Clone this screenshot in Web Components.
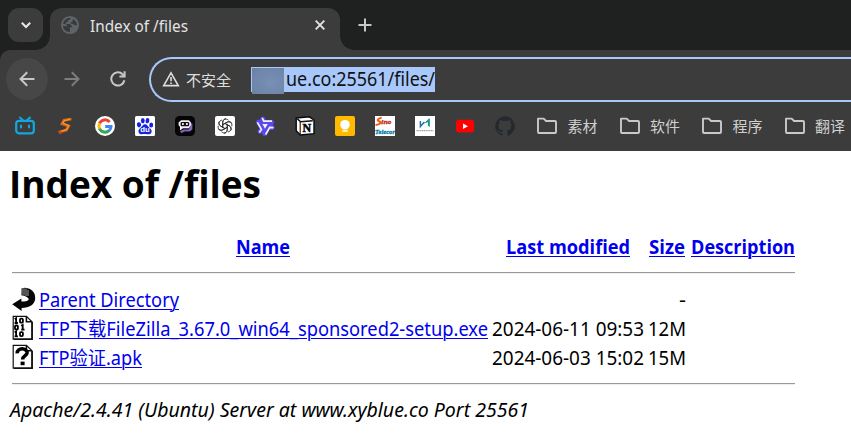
<!DOCTYPE html>
<html lang="zh-CN">
<head>
<meta charset="utf-8">
<title>Index of /files</title>
<style>
html,body{margin:0;height:444px;overflow:hidden;background:#fff}
body{font-family:"Noto Sans","Noto Sans CJK SC",sans-serif;width:851px}
</style>
</head>
<body>
<browser-window></browser-window>
<script>
const make = (name, html, init) => customElements.define(name, class extends HTMLElement {
  connectedCallback() {
    if (this.shadowRoot) return;
    const root = this.attachShadow({mode: 'open'});
    const t = document.createElement('template');
    t.innerHTML = typeof html === 'function' ? html(this) : html;
    root.appendChild(t.content.cloneNode(true));
    if (init) init(this, root);
  }
});

const spin = (angles, d) => angles.map(a => `<path transform="rotate(${a} 10 10)" d="${d}"/>`).join('');

const icons = {
  chevron: ['0 0 12 12', '<path d="M1.8 3.8 6 8l4.2-4.2" fill="none" stroke="#e8e8e8" stroke-width="2"/>'],
  globe: ['0 0 20 20', '<circle cx="10" cy="10" r="9.1" fill="#5f6368"/><path d="M3.1 8.7C4 5 7 3 10.4 3.1L9.8 5H7.7v2H5.8v2.1h4.1l2.2 2.1v1h-2.2v4.7C6 17 3.2 14.4 2.9 11l4 .2V9.4zM13.4 4l3 3.2.7 3-3-.1-.9-1.3h-2.4V7h1.8V5z" fill="#37383a"/>'],
  close: ['0 0 12 12', '<path d="m1.7 1.7 8.6 8.6m0-8.6-8.6 8.6" stroke="#e4e4e4" stroke-width="1.9"/>'],
  plus: ['0 0 14 14', '<path d="M7 .5v13M.5 7h13" stroke="#c7c7c7" stroke-width="2"/>'],
  back: ['0 0 16 16', '<path d="M15.5 8H2M8.2 1.3 1.5 8l6.7 6.7" fill="none" stroke="#c7c7c7" stroke-width="2"/>'],
  forward: ['0 0 16 16', '<path d="M.5 8H14M7.8 1.3 14.5 8l-6.7 6.7" fill="none" stroke="#7d7d7d" stroke-width="2"/>'],
  reload: ['0 0 16 16', '<path d="M14.4 9.2A6.6 6.6 0 1 1 12.8 3.5L14 5" fill="none" stroke="#c7c7c7" stroke-width="2"/><path d="M15.6 .2v6.3H9.4V4.6h4.2V.2z" fill="#c7c7c7"/>'],
  warn: ['0 0 18 16', '<path d="M9 1.8 1.7 14.6h14.6z" fill="none" stroke="#dedede" stroke-width="1.6"/><path d="M9 6v4.3m0 1.2v1.6" stroke="#dedede" stroke-width="1.6"/>'],
  folder: ['0 0 22 18', '<path d="M2 1.6h5.7l2.4 2.4H19q1 0 1 1V15q0 1-1 1H3q-1 0-1-1z" fill="none" stroke="#c9c9c9" stroke-width="1.9" stroke-linejoin="round"/>'],
  tv: ['0 0 20 20', '<path d="m5 1.5 3.2 3M15 1.5l-3.2 3M6 9.6v2m8-2v2" stroke="#12a7df" stroke-width="2" stroke-linecap="round"/><rect x="1.2" y="4.8" width="17.6" height="12.6" rx="2.8" fill="none" stroke="#12a7df" stroke-width="2.2"/>'],
  bolt: ['0 0 20 20', '<path d="M16.4 3 9 4.3 7 7.8l6.6 2.2-2.2 4-7.8 2.2" fill="none" stroke="#e3671c" stroke-width="2.7"/><path d="m15 3.2-6 1.6-1 2.4 6 2.2-2 3.8-6 2.1" fill="none" stroke="#f4a12b" stroke-width="1"/><path d="m3.6 15.2 1.6 3.2 3.2-2.4z" fill="#d43c20"/>'],
  google: ['0 0 20 20', '<circle cx="10" cy="10" r="10" fill="#fff"/><g fill="none" stroke-width="3"><path d="M14.6 6A6 6 0 0 0 4.5 7.4" stroke="#ea4335"/><path d="M4.6 7.3a6 6 0 0 0 0 5.4" stroke="#fbbc05"/><path d="M4.5 12.6a6 6 0 0 0 9.7 1.8" stroke="#34a853"/><path d="M14 14.7c1.3-1.1 2-2.6 2-4.2h-5.8" stroke="#4285f4"/></g>'],
  paw: ['0 0 20 20', '<rect width="20" height="20" rx="1.5" fill="#fff"/><g fill="#1722df"><ellipse cx="4" cy="8.8" rx="2.1" ry="2.6" transform="rotate(-14 4 8.8)"/><ellipse cx="7.8" cy="4.6" rx="1.9" ry="2.7"/><ellipse cx="12.4" cy="4.6" rx="1.9" ry="2.7" transform="rotate(8 12 5)"/><ellipse cx="16.2" cy="9" rx="2" ry="2.5"/><path d="M10 8.3c2.2 0 2.6 2 4.3 3.4 2.4 2 2.8 3.1 2.1 4.7-1.2 2.7-3.8 1.5-6.3 1.5s-5.3 1.1-6.4-1.5c-.8-1.9.2-3.2 2.2-4.8 1.6-1.3 1.9-3.3 4.1-3.3z"/></g><text x="10" y="16.4" text-anchor="middle" font-family="Liberation Sans,sans-serif" font-weight="700" font-size="7.8" fill="#fff">du</text>'],
  poe: ['0 0 20 20', '<rect width="20" height="20" rx="4.5" fill="#050505"/><path d="M15 7.5h2.4v6l-2.6 2H10l-4 1.8v-2.6l8-1z" fill="#416fcf"/><path d="M14.5 8h1.7v4.4l-1.8 1.8H9L5.4 16" fill="none" stroke="#b45aae" stroke-width="1.2"/><path d="M6 4.2h8l1 1.4.9.6v3.4l-.9.5-1 2.2H8L5 14.6v-2.8L4.6 10l-1-.5V6.2l1.2-.6z" fill="#f2eff6"/><rect x="5.6" y="6" width="8.6" height="4.2" rx="1.2" fill="#111"/><path d="M7.9 7.1v2m4-2v2" stroke="#fff" stroke-width="1.6"/>'],
  gpt: ['0 0 20 20', '<rect width="20" height="20" rx="2" fill="#fff"/><g fill="none" stroke="#2a2a2a" stroke-width=".85" stroke-linejoin="round">' + spin([0, 60, 120, 180, 240, 300], 'M7.8 11.2V6.4c0-3.2 3.7-4.4 5.8-2.1M7.8 8.6l4.3-2.5c2-1.1 4.2-.2 4.7 1.2') + '</g>'],
  star: ['0 0 20 20', '<g fill="#5a49ea">' + spin([0, 120, 240], 'M6 .8h3.2L11 4h7.2l1.2 2.4-2.6 4.4H10L4.4 6.6z') + '</g><g fill="none" stroke="#f3f0ff" stroke-width="1.7">' + spin([0, 120, 240], 'M7.2 1.8 8.8 5.2H17') + '</g><path d="M7.4 8h5.4L10 12.8z" fill="#f3f0ff"/>'],
  notion: ['0 0 20 20', '<path d="M1.2 2 14.3.8 19 4v13.7L5.2 19 1.2 14.8z" fill="#fff" stroke="#080808" stroke-width="1.4"/><path d="m2.4 2.9 3.2 2.8 12.2-.9" fill="none" stroke="#111" stroke-width="1.5"/><path d="M5.2 5.7V18" stroke="#111" stroke-width="1.1"/><text x="11.9" y="16" text-anchor="middle" font-family="Liberation Serif,serif" font-weight="700" font-size="12" stroke="#080808" stroke-width=".5">N</text>'],
  keep: ['0 0 20 20', '<rect width="20" height="20" rx="2" fill="#ffba00"/><circle cx="10" cy="8.7" r="4.8" fill="#fff"/><path d="M7.2 11h5.6v2.3H7.2zM7.4 14.2h5.2v1.6H7.4z" fill="#fff"/>'],
  sino: ['0 0 20 20', '<path fill="#fff" d="M0 0h20v20H0z"/><path d="M6.7 1.6C2.6 2.5 1.6 4.4 4 5.1s2.3 2.8-3.5 4" fill="none" stroke="#e35a19" stroke-width="1.9"/><text x="6.3" y="8" textLength="10" lengthAdjust="spacingAndGlyphs" font-family="Liberation Serif,serif" font-size="7" font-weight="700" font-style="italic" fill="#c51f22" stroke="#c51f22" stroke-width=".3">ino</text><text x="0" y="18" textLength="20" lengthAdjust="spacingAndGlyphs" font-family="Liberation Serif,serif" font-size="6.5" font-weight="700" font-style="italic" fill="#087ca6" stroke="#087ca6" stroke-width=".3">Telecor</text>'],
  wave: ['0 0 20 20', '<path fill="#fff" d="M0 0h20v20H0z"/><path d="M5.4 5v5.6l4-4.6" fill="none" stroke="#2a6ea6" stroke-width="1.5"/><path d="M8.8 7.4 14 2.6h.9v8.4l-2-1.2V6.2z" fill="#1c9a91"/><path d="M1.5 14.6h17" stroke="#9aa3aa" stroke-width="1.1" stroke-dasharray="1.3 .5"/>'],
  youtube: ['0 0 20 20', '<rect x="1" y="3.8" width="18" height="12.8" rx="3" fill="#f00"/><path d="m8 7.5 5 2.7-5 2.7z" fill="#fff"/>'],
  github: ['0 0 20 20', '<path fill="#24292f" d="M10 .3a10 10 0 0 0-3.2 19.4c.5.1.7-.2.7-.5v-2c-2.8.6-3.4-1.2-3.4-1.2-.4-1.1-1.1-1.4-1.1-1.4-.9-.6.1-.6.1-.6 1 .1 1.5 1 1.5 1 .9 1.5 2.3 1.1 2.9.8.1-.6.4-1.1.7-1.3-2.3-.3-4.6-1.1-4.6-5 0-1.1.4-2 1-2.7-.1-.3-.4-1.3.1-2.7 0 0 .9-.3 2.8 1a9.5 9.5 0 0 1 5 0c1.9-1.3 2.8-1 2.8-1 .5 1.4.2 2.4.1 2.7.6.7 1 1.6 1 2.7 0 3.9-2.3 4.7-4.6 5 .4.3.7.9.7 1.9v2.8c0 .3.2.6.7.5A10 10 0 0 0 10 .3z"/>'],
  parent: ['0 0 24 26', '<path d="M9.4 2.4 13 1.8C19.5 2.6 23.4 6 23.2 12.4 22.8 18.6 17.4 21.6 9.6 22V25L.2 18.2 9.4 12.4v3.2c4.6-.2 7-1 7.4-2.4C16.4 11.4 13 9.6 9.4 9.2z" fill="#050505"/><path d="M10 2.6v6m2-6.4v7m2-6.6v7.4m2-6v6" stroke="#b8b8b8" stroke-width=".9"/>'],
  binary: ['0 0 24 26', '<path d="M1.2 1.3h13.2l5.6 5.5v17.4H1.2z" fill="#fff" stroke="#111" stroke-width="1.2"/><path d="M14.4 1.3v5.5H20M20.1 7v17.3H2" fill="none" stroke="#111" stroke-width="1.6"/><g fill="none" stroke="#000" stroke-width="1.8"><path d="m2.6 4 1.5-.8v5M2.6 8h3.3M9.2 10.7l1.5-.8v5m-1.5-.2h3.3M2.6 17.3l1.5-.8v5m-1.5-.2h3.3"/><rect x="8" y="3.7" width="2.9" height="4" rx="1"/><rect x="3" y="10.5" width="2.9" height="4" rx="1"/><rect x="8" y="17.1" width="2.9" height="4" rx="1"/></g>'],
  unknown: ['0 0 24 26', '<path d="M1.2 1.3h13.2l5.6 5.5v17.4H1.2z" fill="#fff" stroke="#111" stroke-width="1.2"/><path d="M14.4 1.3v5.5H20M20.1 7v17.3H2" fill="none" stroke="#111" stroke-width="1.6"/><path d="M5.2 9.4C5 3 15.4 3.6 15 9c-.3 3-4.4 3-4.4 6.4" fill="none" stroke="#000" stroke-width="3.6"/><path d="M8.6 17.6h4v3.6h-4z"/>']
};

make('ui-icon', el => {
  const [box, body] = icons[el.getAttribute('name')];
  return `<style>:host{display:block;flex:none}svg{display:block;width:100%;height:100%}</style><svg viewBox="${box}">${body}</svg>`;
});

make('tab-strip', `<style>
:host{display:flex;height:50px;background:#1f2120;box-sizing:border-box;padding:8px 0 0 8px}
.menu{width:35px;height:34px;border-radius:11px;background:#3c3c3c;display:grid;place-items:center}
.menu ui-icon{width:12px;height:12px;margin-top:-1px}
.tab{position:relative;width:290px;height:42px;margin-left:7px;background:#3c3c3c;border-radius:12px 12px 0 0;display:flex;align-items:center;box-sizing:border-box;padding:0 14px 7px 10px;color:#e3e3e3;font-size:15.5px;line-height:24px}
.tab:before,.tab:after{content:"";position:absolute;bottom:0;width:14px;height:14px}
.tab:before{left:-14px;background:radial-gradient(circle at 0 0,#0000 13.5px,#3c3c3c 14px)}
.tab:after{right:-14px;background:radial-gradient(circle at 100% 0,#0000 13.5px,#3c3c3c 14px)}
.g{width:20px;height:20px;margin:-1px 10px 0 0}.x{width:12px;height:12px;margin:-1px 0 0 auto}
.p{width:14px;height:14px;margin:10px 0 0 18px}
</style><div class="menu"><ui-icon name="chevron"></ui-icon></div><div class="tab"><ui-icon class="g" name="globe"></ui-icon><fit-text width="98">Index of /files</fit-text><ui-icon class="x" name="close"></ui-icon></div><ui-icon class="p" name="plus"></ui-icon>`);

make('address-bar', `<style>
:host{display:flex;height:58px;background:#3c3c3c;align-items:center;box-sizing:border-box;padding-left:6px;border-top-left-radius:10px}
.b{width:42px;height:42px;border-radius:50%;background:#474747;display:grid;place-items:center;margin-right:16px}
.b ui-icon,.i{width:16px;height:16px}
.r{margin:0 23px 0 30px}
.box{flex:1;height:45px;box-sizing:border-box;border:2.5px solid #a8c7fa;border-right:0;border-radius:23px 0 0 23px;display:flex;align-items:center;padding-left:11px}
.w{width:18px;height:16px;margin:-1px 6px 0 0}
.s{font-size:15px;color:#dedede;line-height:24px;width:65px;padding-top:1px}
.url{display:flex;align-items:center;height:25px;width:184px;background:#a8c7fa;color:#111;font-size:19px;line-height:25px}
.m{width:32px;height:26px;margin:4px 2px 0 1px;background:radial-gradient(ellipse at 60% 55%,#7890b7,#6b80a3)}
</style><div class="b"><ui-icon name="back"></ui-icon></div><ui-icon class="i" name="forward"></ui-icon><ui-icon class="i r" name="reload"></ui-icon>
<div class="box"><ui-icon class="w" name="warn"></ui-icon><span class="s">不安全</span><div class="url"><span class="m"></span><fit-text width="149">ue.co:25561/files/</fit-text></div></div>`);

make('book-mark', `<style>:host{display:flex;align-items:center;flex:none;width:82.5px;color:#d0d0d0;font-size:15px;line-height:24px}ui-icon{width:22px;height:18px;margin-right:9.5px}</style><ui-icon name="folder"></ui-icon><span><slot></slot></span>`);

make('bookmarks-bar', `<style>
:host{display:flex;height:43px;background:#3c3c3c;align-items:center;box-sizing:border-box;padding:0 0 7px 15px;overflow:hidden}
.f{width:20px;height:20px;margin-right:20px}
book-mark:first-of-type{margin-left:1px}
</style>${['tv','bolt','google','paw','poe','gpt','star','notion','keep','sino','wave','youtube','github'].map(n => `<ui-icon class="f" name="${n}"></ui-icon>`).join('')}<book-mark>素材</book-mark><book-mark>软件</book-mark><book-mark>程序</book-mark><book-mark>翻译</book-mark>`);

make('file-row', `<style>
:host{display:grid;grid-template-columns:27px 453px 156px 38px;height:29px;align-items:center;line-height:29px;font-size:19px}
.z{justify-self:end;display:block;line-height:0}
::slotted(fit-text){line-height:29px}
</style><slot name="icon"></slot><slot name="name"></slot><span><slot name="date"></slot></span><span class="z"><slot name="size"></slot></span>`);

make('directory-page', `<style>
:host{display:block;padding-left:12px;color:#000;font-size:19px}
h1{margin:0 0 0 -3px;padding-top:7px;height:50px;line-height:50px;font-size:38px;font-family:"Open Sans","Noto Sans",sans-serif;font-weight:700}
a{color:#00e;text-decoration:none}
.head{display:grid;grid-template-columns:26px 449px 5px 151px 5px 38px 5px 104px;font-family:"Open Sans","Noto Sans",sans-serif;font-weight:700;line-height:29px;margin-top:25px;justify-items:center}
.rule{height:1px;width:783px;background:#9a9a9a;box-shadow:0 1px #eee}
.r1{margin:10px 0 13px}.r2{margin:10px 0 12px}
address{font-style:italic;line-height:29px;margin-left:-2px}
ui-icon{width:24px;height:26px;margin-top:-3px}
</style>
<h1><fit-text width="252">Index of /files</fit-text></h1>
<div class="head"><span></span><a href="#"><fit-text u width="54">Name</fit-text></a><span></span><a href="#"><fit-text u width="124">Last modified</fit-text></a><span></span><a href="#"><fit-text u width="36">Size</fit-text></a><span></span><a href="#"><fit-text u width="104">Description</fit-text></a></div>
<div class="rule r1"></div>
<file-row><ui-icon slot="icon" name="parent"></ui-icon><a href="#" slot="name"><fit-text u width="140">Parent Directory</fit-text></a><fit-text slot="size" width="7">-</fit-text></file-row>
<file-row><ui-icon slot="icon" name="binary"></ui-icon><a href="#" slot="name"><fit-text u width="449">FTP下载FileZilla_3.67.0_win64_sponsored2-setup.exe</fit-text></a><fit-text slot="date" width="152">2024-06-11 09:53</fit-text><fit-text slot="size" width="38">12M</fit-text></file-row>
<file-row><ui-icon slot="icon" name="unknown"></ui-icon><a href="#" slot="name"><fit-text u width="103">FTP验证.apk</fit-text></a><fit-text slot="date" width="152">2024-06-03 15:02</fit-text><fit-text slot="size" width="38">15M</fit-text></file-row>
<div class="rule r2"></div>
<address><fit-text width="519">Apache/2.4.41 (Ubuntu) Server at www.xyblue.co Port 25561</fit-text></address>`);

make('browser-window', `<style>:host{display:block;width:851px;height:444px;overflow:hidden;background:#fff}.bar{background:#1f2120}</style>
<tab-strip></tab-strip><div class="bar"><address-bar></address-bar></div><bookmarks-bar></bookmarks-bar><directory-page></directory-page>`);

// Condenses or widens one line of text so that it fills the given width.
make('fit-text', `<style>:host{display:inline-block;white-space:nowrap;vertical-align:top}span{display:inline-block;transform-origin:0 50%;vertical-align:top}
:host([u]) span{text-decoration:underline;text-decoration-thickness:1px;text-underline-offset:2px}</style><span><slot></slot></span>`, (el, root) => {
  const span = root.querySelector('span'), w = +el.getAttribute('width');
  const natural = span.getBoundingClientRect().width;
  el.style.width = w + 'px';
  if (natural) span.style.transform = `scaleX(${w / natural})`;
});
</script>
</body>
</html>
